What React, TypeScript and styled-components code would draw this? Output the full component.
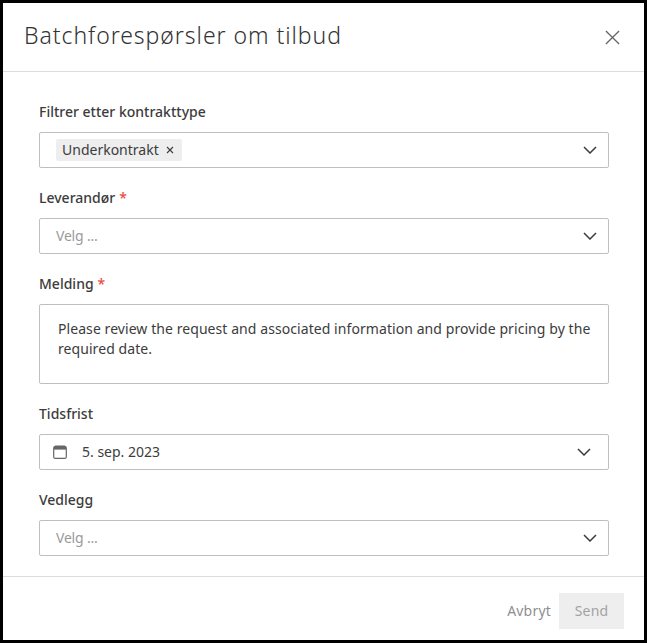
import React from "react";
import styled, { createGlobalStyle } from "styled-components";

const GlobalStyle = createGlobalStyle`
  html, body {
    margin: 0;
    padding: 0;
    background: #000;
  }
  body {
    font-family: "Noto Sans", "Open Sans", sans-serif;
    color: #3c3c3c;
  }
`;

const Chevron = () => (
  <ChevronIcon viewBox="0 0 14 8" fill="none">
    <path d="M1 1l6 6 6-6" stroke="#3c3c3c" strokeWidth="1.5" />
  </ChevronIcon>
);

const Field = ({ label, required, children }: { label: string; required?: boolean; children: React.ReactNode }) => (
  <FieldBox>
    <Label>
      {label}
      {required && <Star>*</Star>}
    </Label>
    {children}
  </FieldBox>
);

const App = () => {
  return (
    <Screen>
      <GlobalStyle />
      <Modal>
        <Header>
          <Title>Batchforespørsler om tilbud</Title>
          <CloseIcon viewBox="0 0 16 16" fill="none">
            <path d="M1 1l14 14M15 1L1 15" stroke="#666" strokeWidth="1.4" />
          </CloseIcon>
        </Header>
        <Body>
          <Field label="Filtrer etter kontrakttype">
            <SelectBox>
              <Chip>
                Underkontrakt
                <ChipX viewBox="0 0 8 8" fill="none">
                  <path d="M1 1l6 6M7 1L1 7" stroke="#3c3c3c" strokeWidth="1.1" />
                </ChipX>
              </Chip>
              <Chevron />
            </SelectBox>
          </Field>
          <Field label="Leverandør" required>
            <SelectBox>
              <Placeholder>Velg ...</Placeholder>
              <Chevron />
            </SelectBox>
          </Field>
          <Field label="Melding" required>
            <MessageBox>
              Please review the request and associated information and provide pricing by the required date.
            </MessageBox>
          </Field>
          <Field label="Tidsfrist">
            <SelectBox $date>
              <CalendarIcon viewBox="0 0 14 14" fill="none">
                <path d="M3 0v2M5 0v2M7 0v2M9 0v2M11 0v2" stroke="#666" strokeWidth="1" />
                <rect x=".7" y="1.7" width="12.6" height="11.6" rx="1.2" stroke="#666" strokeWidth="1.2" />
                <path d="M1 2h12v2.6H1z" fill="#666" />
              </CalendarIcon>
              <DateText>5. sep. 2023</DateText>
              <Chevron />
            </SelectBox>
          </Field>
          <Field label="Vedlegg">
            <SelectBox>
              <Placeholder>Velg ...</Placeholder>
              <Chevron />
            </SelectBox>
          </Field>
        </Body>
        <Footer>
          <CancelButton>Avbryt</CancelButton>
          <SendButton>Send</SendButton>
        </Footer>
      </Modal>
    </Screen>
  );
};

export default App;

const Screen = styled.div`
  width: 647px;
  height: 643px;
  padding: 3px;
  box-sizing: border-box;
  background: #000;
  overflow: hidden;
`;

const Modal = styled.div`
  width: 641px;
  height: 637px;
  background: #fff;
  display: flex;
  flex-direction: column;
`;

const Header = styled.div`
  flex-shrink: 0;
  height: 68px;
  border-bottom: 1px solid #dcdcdc;
  padding: 0 24px 0 21px;
  display: flex;
  align-items: center;
  justify-content: space-between;
`;

const Title = styled.h1`
  margin: 0 0 4px;
  font-size: 23px;
  font-weight: 300;
  letter-spacing: 0.95px;
  color: #333;
`;

const CloseIcon = styled.svg`
  width: 15px;
  height: 15px;
`;

const Body = styled.div`
  flex: 1;
  min-height: 0;
  padding: 30px 35px 0 36px;
  display: flex;
  flex-direction: column;
  gap: 20px;
`;

const FieldBox = styled.div`
  display: flex;
  flex-direction: column;
  gap: 10px;
`;

const Label = styled.div`
  height: 20px;
  line-height: 20px;
  font-size: 14px;
  font-weight: 500;
  color: #3c3c3c;
`;

const Star = styled.span`
  color: #ec4a41;
  margin-left: 4px;
`;

const SelectBox = styled.div<{ $date?: boolean }>`
  height: 36px;
  flex-shrink: 0;
  box-sizing: border-box;
  border: 1px solid #bfbfbf;
  border-radius: 2px;
  display: flex;
  align-items: center;
  padding: 0 ${(p) => (p.$date ? "17px" : "11px")} 0 ${(p) => (p.$date ? "13px" : "16px")};
`;

const ChevronIcon = styled.svg`
  width: 14px;
  height: 8px;
  margin-left: auto;
`;

const Chip = styled.span`
  height: 22px;
  box-sizing: border-box;
  padding: 0 8px 2px 6px;
  background: #eeeeee;
  border-radius: 2px;
  display: inline-flex;
  align-items: center;
  gap: 7px;
  font-size: 14px;
  color: #3c3c3c;
`;

const ChipX = styled.svg`
  width: 8px;
  height: 8px;
  margin-top: 2px;
`;

const Placeholder = styled.span`
  margin-bottom: 2px;
  font-size: 14px;
  letter-spacing: -0.2px;
  color: #9a9a9a;
`;

const MessageBox = styled.div`
  height: 80px;
  box-sizing: border-box;
  border: 1px solid #bfbfbf;
  border-radius: 2px;
  padding: 14px 12px 14px 18px;
  font-size: 14px;
  line-height: 20px;
  letter-spacing: 0.07px;
  color: #3c3c3c;
`;

const CalendarIcon = styled.svg`
  width: 14px;
  height: 14px;
`;

const DateText = styled.span`
  margin: 0 0 2px 15px;
  font-size: 14px;
  color: #3c3c3c;
`;

const Footer = styled.div`
  flex-shrink: 0;
  height: 64px;
  box-sizing: border-box;
  border-top: 1px solid #dcdcdc;
  padding: 16px 20px 0 0;
  display: flex;
  justify-content: flex-end;
  align-items: flex-start;
  gap: 8px;
`;

const CancelButton = styled.div`
  height: 36px;
  line-height: 36px;
  font-size: 14px;
  letter-spacing: 0.2px;
  color: #8f8f8f;
`;

const SendButton = styled.div`
  width: 65px;
  height: 36px;
  line-height: 36px;
  text-align: center;
  background: #eeeeee;
  font-size: 14px;
  letter-spacing: 0.2px;
  color: #a3a3a3;
`;
